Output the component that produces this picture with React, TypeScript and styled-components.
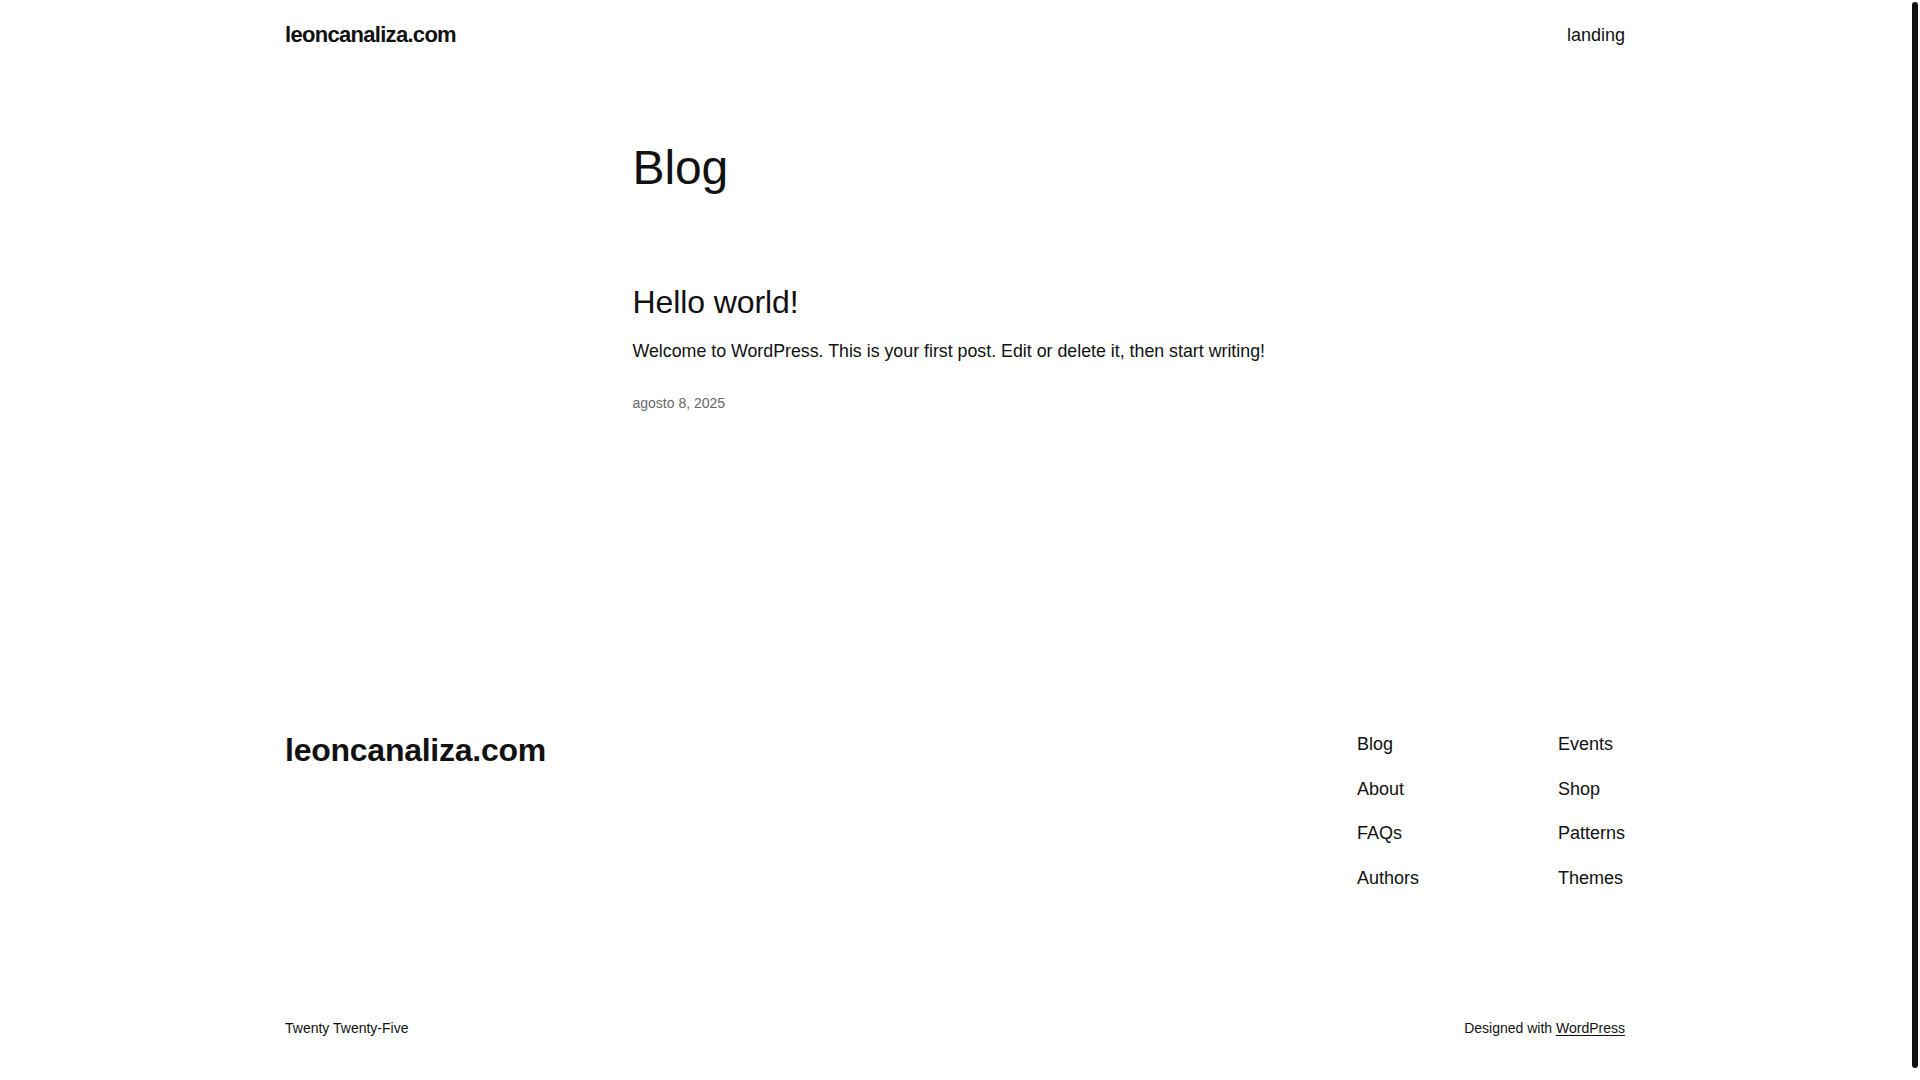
import React from "react";
import styled, { createGlobalStyle } from "styled-components";

const GlobalStyle = createGlobalStyle`
  html { overflow: hidden; }
  body {
    margin: 0;
    background: #ffffff;
    color: #111111;
    font-family: "Liberation Sans", Arial, sans-serif;
    -webkit-font-smoothing: antialiased;
  }
  a { color: inherit; }
`;

const Page = styled.div`
  width: calc(100% - 10px);
  min-height: 1080px;
  padding-top: 1px;
  display: flex;
  flex-direction: column;
`;

const Wide = styled.div`
  width: 100%;
  max-width: 1340px;
  margin: 0 auto;
`;

const Header = styled.header`
  height: 68px;
`;

const HeaderInner = styled(Wide)`
  height: 100%;
  display: flex;
  align-items: center;
  justify-content: space-between;
`;

const SiteTitle = styled.a<{ $size: number; $spacing: number }>`
  font-size: ${(p) => p.$size}px;
  font-weight: 700;
  letter-spacing: ${(p) => p.$spacing}px;
  line-height: 1.2;
  text-decoration: none;
  color: #111111;
`;

const NavLink = styled.a`
  font-size: 18px;
  line-height: 1.5;
  text-decoration: none;
  color: #111111;
`;

const Main = styled.main`
  padding: 70px 0 156px;
`;

const Column = styled.div`
  width: 100%;
  max-width: 645px;
  margin: 0 auto;
`;

const PageTitle = styled.h1`
  margin: 0;
  font-size: 48px;
  font-weight: 400;
  line-height: 1.2;
  letter-spacing: -0.1px;
`;

const Post = styled.article`
  margin-top: 86px;
  display: flex;
  flex-direction: column;
`;

const PostTitle = styled.h2`
  margin: 0;
  font-size: 32px;
  font-weight: 400;
  line-height: 1.2;
  letter-spacing: -0.1px;
`;

const Excerpt = styled.p`
  margin: 17px 0 0;
  font-size: 17.8px;
  line-height: 1.5;
`;

const PostDate = styled.time`
  margin-top: 29px;
  font-size: 14px;
  line-height: 1.4;
  color: #686868;
`;

const Footer = styled.footer`
  padding: 162px 0 42px;
`;

const FooterTop = styled(Wide)`
  display: flex;
  justify-content: space-between;
  align-items: flex-start;
`;

const FooterNav = styled.nav`
  display: grid;
  grid-template-columns: repeat(2, auto);
  column-gap: 139px;
`;

const NavList = styled.ul`
  list-style: none;
  margin: 0;
  padding: 0;
  display: flex;
  flex-direction: column;
  gap: 17.5px;
`;

const FooterBottom = styled(Wide)`
  margin-top: 127px;
  display: flex;
  justify-content: space-between;
  font-size: 14px;
  line-height: 1.4;
`;

const Credit = styled.span``;

const CreditLink = styled.a`
  text-decoration: underline;
  text-underline-offset: 2px;
  text-decoration-thickness: 1px;
`;

const ScrollThumb = styled.div`
  position: fixed;
  top: 2px;
  right: 2px;
  width: 6px;
  height: calc(100% - 14px);
  border-radius: 3px;
  background: #111111;
`;

const navCols = [
  ["Blog", "About", "FAQs", "Authors"],
  ["Events", "Shop", "Patterns", "Themes"],
];

export default function App() {
  return (
    <>
      <GlobalStyle />
      <Page>
        <Header>
          <HeaderInner>
            <SiteTitle href="#" $size={22} $spacing={-0.7}>
              leoncanaliza.com
            </SiteTitle>
            <NavLink href="#">landing</NavLink>
          </HeaderInner>
        </Header>
        <Main>
          <Column>
            <PageTitle>Blog</PageTitle>
            <Post>
              <PostTitle>Hello world!</PostTitle>
              <Excerpt>
                Welcome to WordPress. This is your first post. Edit or delete it, then start writing!
              </Excerpt>
              <PostDate>agosto 8, 2025</PostDate>
            </Post>
          </Column>
        </Main>
        <Footer>
          <FooterTop>
            <SiteTitle href="#" $size={32} $spacing={-0.25}>
              leoncanaliza.com
            </SiteTitle>
            <FooterNav>
              {navCols.map((col, i) => (
                <NavList key={i}>
                  {col.map((item) => (
                    <li key={item}>
                      <NavLink href="#">{item}</NavLink>
                    </li>
                  ))}
                </NavList>
              ))}
            </FooterNav>
          </FooterTop>
          <FooterBottom>
            <Credit>Twenty Twenty-Five</Credit>
            <Credit>
              Designed with <CreditLink href="#">WordPress</CreditLink>
            </Credit>
          </FooterBottom>
        </Footer>
      </Page>
      <ScrollThumb />
    </>
  );
}
